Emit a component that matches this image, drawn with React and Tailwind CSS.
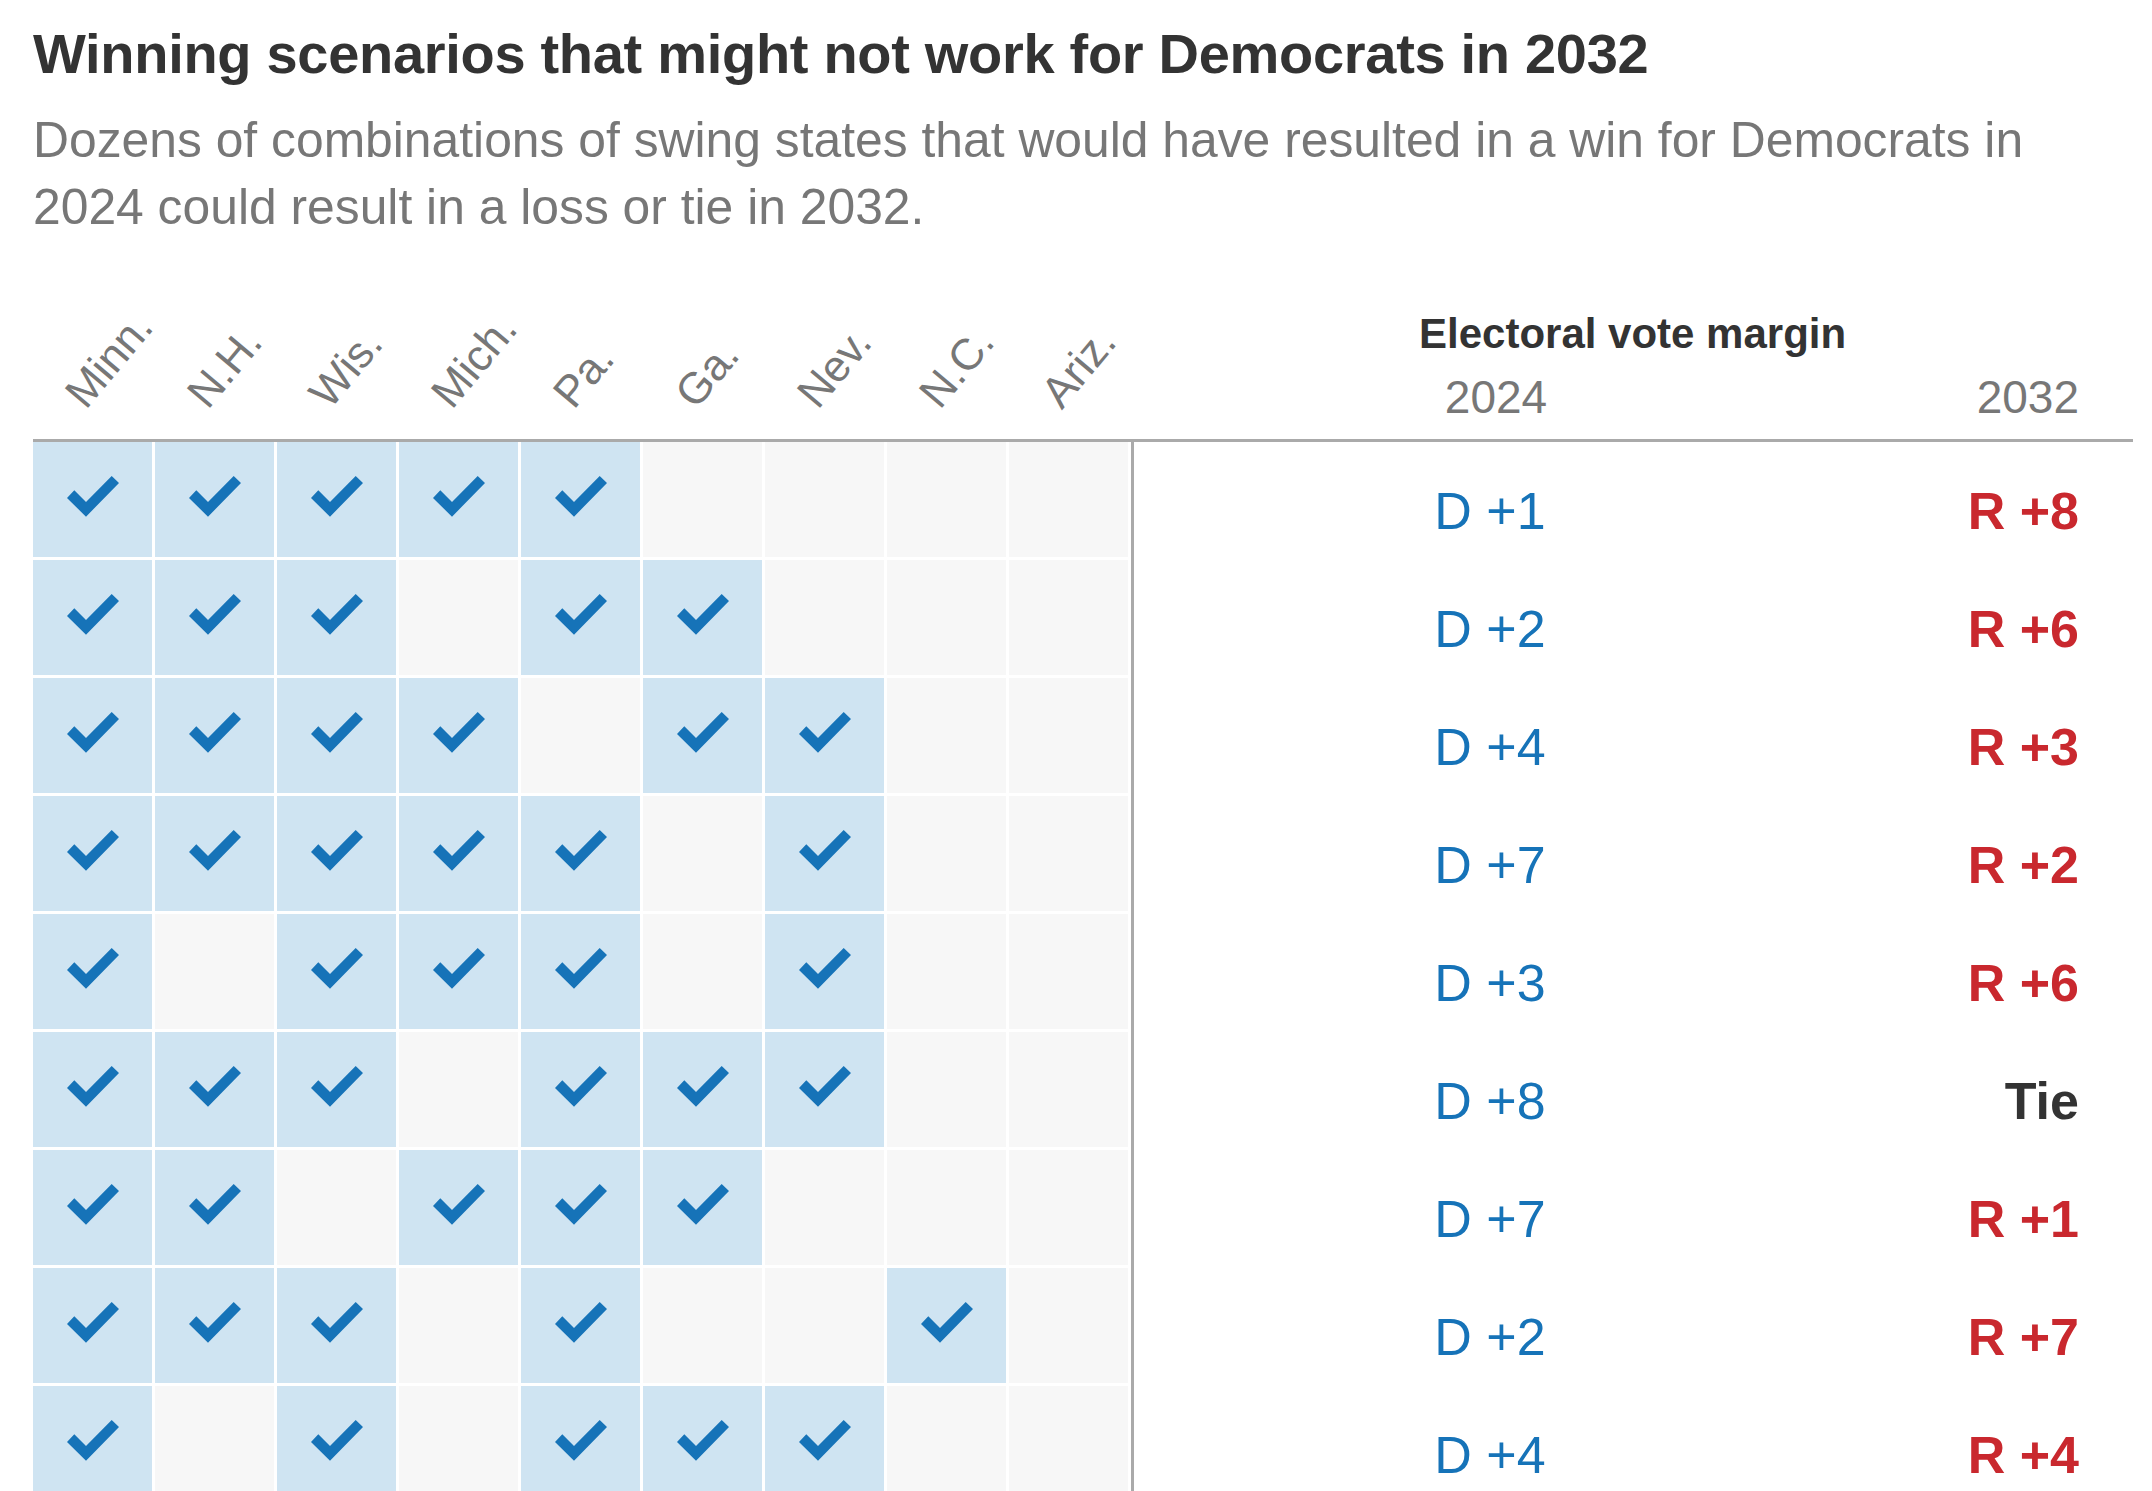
import React from "react";

const STATES = ["Minn.", "N.H.", "Wis.", "Mich.", "Pa.", "Ga.", "Nev.", "N.C.", "Ariz."];

const ROWS = [
  { on: [0, 1, 2, 3, 4], d: "D +1", r: "R +8" },
  { on: [0, 1, 2, 4, 5], d: "D +2", r: "R +6" },
  { on: [0, 1, 2, 3, 5, 6], d: "D +4", r: "R +3" },
  { on: [0, 1, 2, 3, 4, 6], d: "D +7", r: "R +2" },
  { on: [0, 2, 3, 4, 6], d: "D +3", r: "R +6" },
  { on: [0, 1, 2, 4, 5, 6], d: "D +8", r: "Tie" },
  { on: [0, 1, 3, 4, 5], d: "D +7", r: "R +1" },
  { on: [0, 1, 2, 4, 7], d: "D +2", r: "R +7" },
  { on: [0, 2, 4, 5, 6], d: "D +4", r: "R +4" },
];

function Check() {
  return (
    <svg width="52" height="41" viewBox="0 0 52 41" className="mb-[6px]">
      <polygon points="0,22 7.3,14.3 19,26 44.7,0 52,7 19,40.7" fill="#1673b8" />
    </svg>
  );
}

export default function App() {
  return (
    <div className="w-[2152px] h-[1491px] overflow-hidden bg-white font-['Liberation_Sans',Arial,sans-serif]">
      <div className="pl-[33px] pr-[19px] pt-[22px]">
        <h1 className="text-[56px] leading-[64px] font-bold text-[#333333] tracking-[-0.3px] whitespace-nowrap">
          Winning scenarios that might not work for Democrats in 2032
        </h1>
        <p className="mt-[21px] text-[49.8px] leading-[67px] text-[#777777] max-w-[2040px]">
          Dozens of combinations of swing states that would have resulted in a win for Democrats in 2024 could result in a loss or tie in 2032.
        </p>

        {/* header */}
        <div className="flex h-[198px]">
          <div className="w-[1101px] grid grid-cols-[repeat(9,119px)] gap-x-[3px]">
            {STATES.map((s) => (
              <div key={s} className="relative h-full">
                <span className="absolute left-[58px] bottom-[24px] origin-bottom-left -rotate-[50deg] text-[44px] leading-none text-[#777777] whitespace-nowrap">
                  {s}
                </span>
              </div>
            ))}
          </div>
          <div className="flex-1 flex flex-col justify-end pb-[19px]">
            <div className="pl-[285px] text-[42px] leading-none font-bold text-[#333333] whitespace-nowrap">
              Electoral vote margin
            </div>
            <div className="mt-[19px] flex pl-[262px] pr-[54px] text-[46px] leading-none text-[#777777]">
              <div className="w-[200px] text-center">2024</div>
              <div className="flex-1 text-right">2032</div>
            </div>
          </div>
        </div>

        <div className="h-[3px] bg-[#aaaaaa]" />

        {/* body */}
        <div className="flex">
          <div className="flex">
            <div className="grid grid-cols-[repeat(9,119px)] gap-[3px]">
              {ROWS.map((row, ri) =>
                STATES.map((s, ci) => {
                  const on = row.on.includes(ci);
                  return (
                    <div
                      key={ri + "-" + ci}
                      className={
                        "h-[115px] flex items-center justify-center " +
                        (on ? "bg-[#cfe4f2]" : "bg-[#f7f7f7]")
                      }
                    >
                      {on ? <Check /> : null}
                    </div>
                  );
                })
              )}
            </div>
            <div className="ml-[3px] w-[3px] bg-[#aaaaaa] self-stretch" />
          </div>
          <div className="flex-1 flex flex-col gap-[3px]">
            {ROWS.map((row, ri) => (
              <div key={ri} className="h-[115px] pt-[22px] flex items-center pl-[256px] pr-[54px] text-[52px] leading-none">
                <div className="w-[200px] text-center text-[#1673b8]">{row.d}</div>
                <div
                  className={
                    "flex-1 text-right font-bold " +
                    (row.r === "Tie" ? "text-[#333333]" : "text-[#c9282e]")
                  }
                >
                  {row.r}
                </div>
              </div>
            ))}
          </div>
        </div>
      </div>
    </div>
  );
}
